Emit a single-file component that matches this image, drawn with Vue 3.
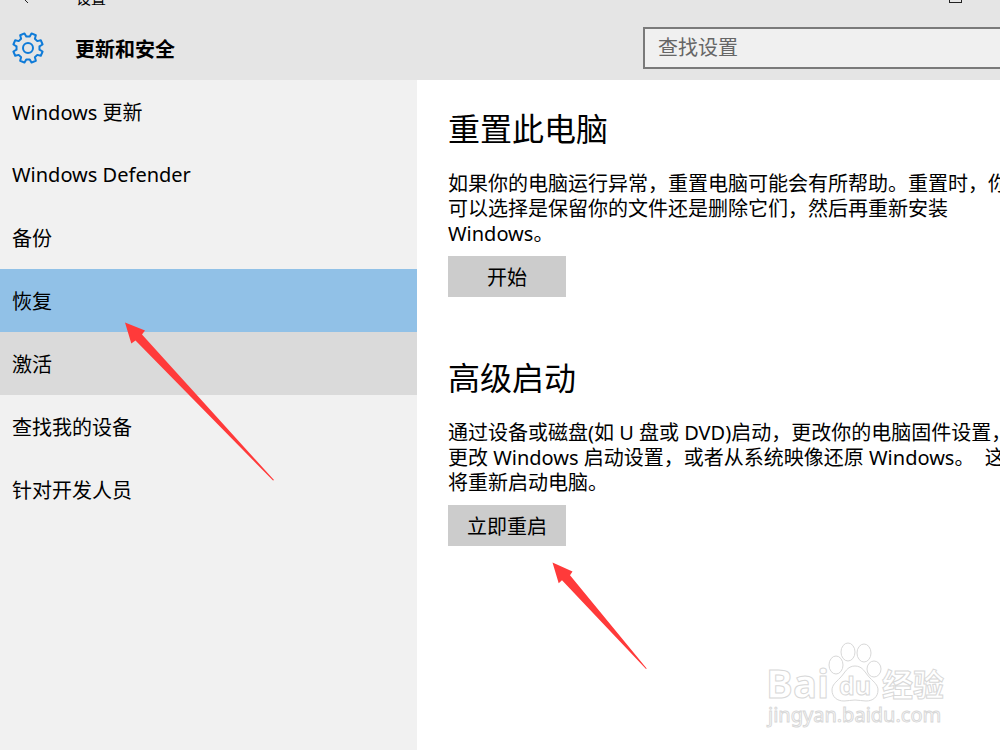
<script setup>
import { ref } from 'vue'

const query = ref('')
const items = ['Windows 更新', 'Windows Defender', '备份', '恢复', '激活', '查找我的设备', '针对开发人员']
const selected = ref('恢复')
const hovered = '激活'

const point = (radius, degrees) => {
  const a = (degrees * Math.PI) / 180
  return `${(16 + radius * Math.sin(a)).toFixed(2)} ${(16 - radius * Math.cos(a)).toFixed(2)}`
}
const gear = Array.from({ length: 8 }, (_, k) => {
  const c = 22.5 + k * 45
  return `${k ? 'L' : 'M'}${point(11.6, c - 14)} L${point(15, c - 9)} L${point(15, c + 9)} L${point(11.6, c + 14)}`
}).join(' ') + ' Z'
</script>

<template>
  <div class="window">
    <div class="titlebar">
      <button class="back" aria-label="返回">
        <svg width="16" height="16" viewBox="0 0 16 16"><path d="M15 8H2M8 2L2 8l6 6" /></svg>
      </button>
      <span class="caption">设置</span>
      <button class="maximize" aria-label="最大化">
        <svg width="14" height="14" viewBox="0 0 14 14"><rect x=".5" y=".5" width="12" height="12" /></svg>
      </button>
    </div>

    <header class="header">
      <svg class="gear" width="32" height="32" viewBox="0 0 32 32" aria-hidden="true">
        <path :d="gear" />
        <circle cx="16" cy="16" r="5" />
      </svg>
      <h1>更新和安全</h1>
      <input v-model="query" class="search" type="text" placeholder="查找设置" aria-label="查找设置" />
    </header>

    <div class="body">
      <nav class="sidebar">
        <button
          v-for="item in items"
          :key="item"
          class="item"
          :class="{ selected: item === selected, hovered: item === hovered }"
          @click="selected = item"
        >{{ item }}</button>
      </nav>

      <main class="content">
        <section>
          <h2>重置此电脑</h2>
          <p>如果你的电脑运行异常，重置电脑可能会有所帮助。重置时，你<br />可以选择是保留你的文件还是删除它们，然后再重新安装<br />Windows。</p>
          <button class="action">开始</button>
        </section>
        <section>
          <h2>高级启动</h2>
          <p>通过设备或磁盘(如 U 盘或 DVD)启动，更改你的电脑固件设置，<br />更改 Windows 启动设置，或者从系统映像还原 Windows。&nbsp; 这<br />将重新启动电脑。</p>
          <button class="action">立即重启</button>
        </section>
      </main>
    </div>

    <svg class="arrow arrow-recovery" width="150" height="160" viewBox="0 0 150 160" aria-hidden="true">
      <path d="M0 .5L20 8.500L17 12.500L149 158L148 158.500L10.500 18.500L6.300 21.500Z" />
    </svg>
    <svg class="arrow arrow-restart" width="96" height="108" viewBox="0 0 96 108" aria-hidden="true">
      <path d="M.5 .5L20.500 9.500L18 13.300L94.700 106.500L94 107L10 18.300L6.700 21.300Z" />
    </svg>

    <svg class="watermark" width="200" height="100" viewBox="0 0 200 100">
      <text class="brand" x="6" y="58">Bai</text>
      <g class="paw">
        <ellipse cx="76" cy="25" rx="7" ry="9" />
        <ellipse cx="88" cy="12" rx="7" ry="9" />
        <ellipse cx="104" cy="13" rx="7" ry="9" />
        <ellipse cx="114" cy="29" rx="7" ry="8" />
        <path d="M95 26c-8 0-10 7-15 12c-4 4-8 7-8 12c0 7 5 11 12 11c4 0 7-1 11-1s7 1 11 1c7 0 12-4 12-11c0-5-4-8-8-12c-5-5-7-12-15-12z" />
      </g>
      <text class="du" x="79" y="55">du</text>
      <text class="cjk" x="122" y="56">经验</text>
      <text class="site" x="8" y="82">jingyan.baidu.com</text>
    </svg>
  </div>
</template>

<style>
body {
  margin: 0;
}
</style>

<style scoped>
.window {
  position: relative;
  display: flex;
  flex-direction: column;
  min-height: 100vh;
  overflow: hidden;
  background: #fff;
  color: #000;
  font-family: "Noto Sans", "Noto Sans CJK SC", sans-serif;
  font-size: 20px;
}

button {
  border: 0;
  padding: 0;
  font: inherit;
  color: inherit;
  background: none;
}

svg {
  display: block;
}

.titlebar {
  display: flex;
  align-items: center;
  height: 38px;
  margin-top: -22px;
  padding: 0 37px 0 20px;
  background: #e5e5e5;
  font-size: 15px;
}

.back path,
.maximize rect {
  fill: none;
  stroke: #222;
  stroke-width: 1;
}

.caption {
  flex: 1;
  margin-left: 40px;
}

.header {
  display: flex;
  align-items: center;
  height: 64px;
  padding-left: 12px;
  overflow: hidden;
  background: #e5e5e5;
}

.gear {
  flex: none;
  fill: none;
  stroke: #0f7bd8;
  stroke-width: 2;
  stroke-linejoin: round;
}

h1 {
  flex: none;
  width: 568px;
  margin: 0 0 0 31px;
  font-size: 20px;
  font-weight: 700;
}

.search {
  box-sizing: border-box;
  flex: 1;
  min-width: 0;
  height: 42px;
  margin-right: -4px;
  padding: 0 13px 2px;
  border: 2px solid #7a7a7a;
  border-radius: 0;
  outline: 0;
  background: #f0f0f0;
  font: inherit;
}

.search::placeholder {
  color: #666;
  opacity: 1;
}

.body {
  display: flex;
  flex: 1;
}

.sidebar {
  display: flex;
  flex: none;
  flex-direction: column;
  width: 417px;
  background: #f1f1f1;
}

.item {
  height: 63px;
  padding-left: 12px;
  text-align: left;
}

.hovered {
  background: #dadada;
}

.selected {
  background: #91c1e7;
}

.content {
  display: flex;
  flex: 1;
  flex-direction: column;
  gap: 57px;
  min-width: 0;
  padding: 25px 0 0 31px;
  overflow: hidden;
  white-space: nowrap;
}

h2 {
  margin: 0;
  font-size: 32px;
  font-weight: 400;
  line-height: 48px;
}

p {
  margin: 18px 0 10px;
  line-height: 25px;
}

.action {
  width: 118px;
  height: 41px;
  background: #ccc;
}

.arrow {
  position: absolute;
  fill: #ff3a3a;
  pointer-events: none;
}

.arrow-recovery {
  left: 125px;
  top: 322px;
}

.arrow-restart {
  left: 552px;
  top: 562px;
}

.watermark {
  position: absolute;
  left: 760px;
  top: 640px;
  fill: #fff;
  stroke: #d8d8d8;
  stroke-width: 1;
  pointer-events: none;
}

.brand,
.du {
  font-family: "Open Sans", sans-serif;
  font-size: 40px;
  font-weight: 700;
}

.du {
  font-size: 25px;
}

.cjk {
  font-family: "Noto Sans CJK SC", sans-serif;
  font-size: 31px;
  font-weight: 700;
}

.site {
  font-size: 20px;
}
</style>
